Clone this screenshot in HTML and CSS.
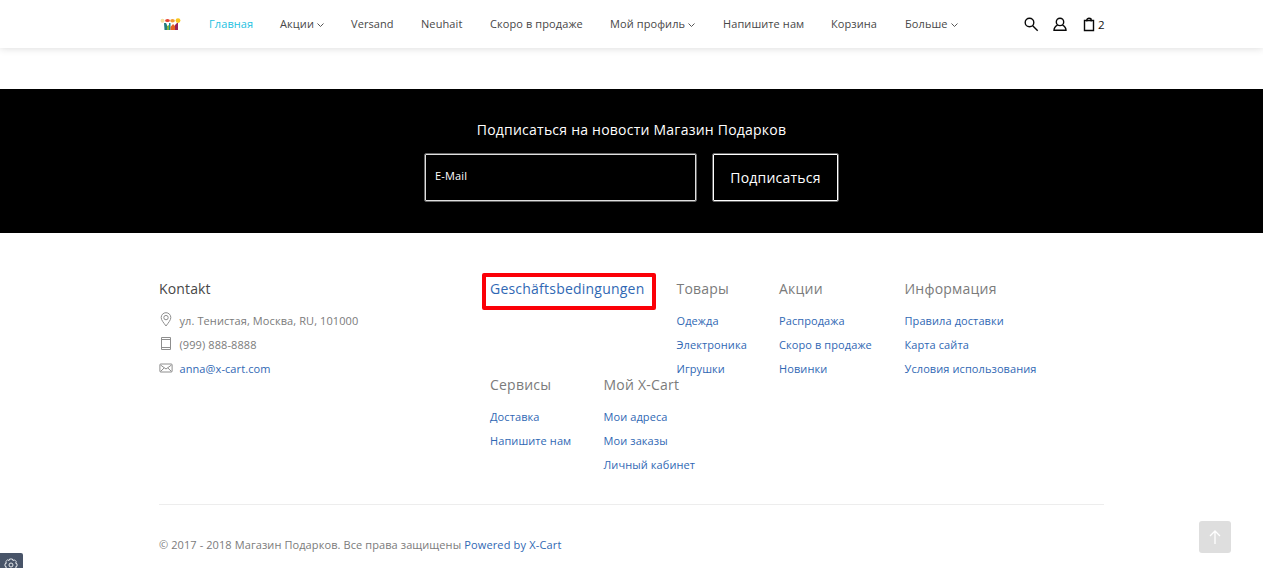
FILE: index.html
```html
<!DOCTYPE html>
<html lang="ru">
<head>
<meta charset="utf-8">
<title>Магазин Подарков</title>
<link rel="stylesheet" href="styles.css">
</head>
<body>
<header class="header">
  <a class="logo" href="#">
    <svg width="21" height="13" viewBox="0 0 21 13">
      <circle cx="2.5" cy="2.8" r="2" fill="#f3dfa0"/>
      <ellipse cx="7.5" cy="2.5" rx="2.4" ry="1.6" fill="#e5402f"/>
      <ellipse cx="12.5" cy="2.8" rx="2.3" ry="1.7" fill="#f09a32"/>
      <circle cx="18" cy="2.6" r="2.4" fill="#f8c51c"/>
      <path d="M4 5h2l1 2v5H4.500z" fill="#247d80"/>
      <path d="M7 8l2-1v5H7z" fill="#80b63c"/>
      <path d="M9 5h1.500v7H9z" fill="#168d9a"/>
      <path d="M10.500 9l2.500-3 2 2v4h-4.500z" fill="#e66221"/>
      <path d="M15 7l2-2h1v7h-3z" fill="#982259"/>
    </svg>
  </a>
  <nav class="nav">
    <a class="active" href="#">Главная</a>
    <a href="#">Акции<svg class="caret" viewBox="0 0 7 4"><path d="M.5.5l3 3 3-3"/></svg></a>
    <a href="#">Versand</a>
    <a href="#">Neuhait</a>
    <a href="#">Скоро в продаже</a>
    <a href="#">Мой профиль<svg class="caret" viewBox="0 0 7 4"><path d="M.5.5l3 3 3-3"/></svg></a>
    <a href="#">Напишите нам</a>
    <a href="#">Корзина</a>
    <a href="#">Больше<svg class="caret" viewBox="0 0 7 4"><path d="M.5.5l3 3 3-3"/></svg></a>
  </nav>
  <div class="tools">
    <svg width="15" height="15" viewBox="0 0 15 15"><circle cx="5.500" cy="5.500" r="4.300"/><path d="M8.700 8.700l5 5"/></svg>
    <svg width="14" height="15" viewBox="0 0 14 15"><circle cx="7" cy="4.900" r="3.700"/><path d="M4.600 8.100C2.300 9.200 1 10.800 1 13.300h12c0-2.500-1.300-4.100-3.600-5.200"/></svg>
    <svg width="12" height="15" viewBox="0 0 12 15"><path d="M1.500 3.500h9v10h-9zM3.800 4.500V3C3.800.7 8.200.7 8.200 3v1.500"/></svg>
    <span class="count">2</span>
  </div>
</header>

<section class="subscribe">
  <h2 class="subscribe-title">Подписаться на новости Магазин Подарков</h2>
  <form class="subscribe-form">
    <input class="email" type="text" placeholder="E-Mail">
    <button class="submit" type="button">Подписаться</button>
  </form>
</section>

<footer class="footer">
  <div class="footer-main">
    <div class="contact">
      <h3 class="dark">Kontakt</h3>
      <p><svg width="14" height="15" viewBox="0 0 14 15"><path d="M7 14C4.500 10.500 2.200 8.200 2.200 5.500a4.800 4.800 0 0 1 9.600 0C11.800 8.200 9.500 10.500 7 14z"/><circle cx="7" cy="5.600" r="2.200"/></svg><span>ул. Тенистая, Москва, RU, 101000</span></p>
      <p><svg width="14" height="15" viewBox="0 0 14 15"><path d="M2.500 1.500h9v12h-9zM2.500 3.500h9M2.500 11.500h9"/></svg><span>(999) 888-8888</span></p>
      <p><svg width="14" height="15" viewBox="0 0 14 15"><rect x=".9" y="4" width="12.200" height="8" rx=".8"/><path d="M1.500 5L7 9l5.500-4M1.500 11.500l3.600-3.500M12.500 11.500L8.900 8"/></svg><a href="#">anna@x-cart.com</a></p>
    </div>
    <div class="links">
      <div class="links-row first">
        <div><h3 class="marked"><a href="#">Geschäftsbedingungen</a></h3></div>
        <div><h3>Товары</h3><a href="#">Одежда</a><a href="#">Электроника</a><a href="#">Игрушки</a></div>
        <div><h3>Акции</h3><a href="#">Распродажа</a><a href="#">Скоро в продаже</a><a href="#">Новинки</a></div>
        <div><h3>Информация</h3><a href="#">Правила доставки</a><a href="#">Карта сайта</a><a href="#">Условия использования</a></div>
      </div>
      <div class="links-row second">
        <div><h3>Сервисы</h3><a href="#">Доставка</a><a href="#">Напишите нам</a></div>
        <div><h3>Мой X-Cart</h3><a href="#">Мои адреса</a><a href="#">Мои заказы</a><a href="#">Личный кабинет</a></div>
      </div>
    </div>
  </div>
  <div class="copyright">© 2017 - 2018 Магазин Подарков. Все права защищены <a href="#">Powered by X-Cart</a></div>
</footer>

<a class="to-top" href="#"><svg width="14" height="16" viewBox="0 0 14 16"><path d="M7 15V2M2 7l5-5 5 5"/></svg></a>
<a class="settings" href="#"><svg width="14" height="14" viewBox="0 0 14 14"><path d="M5.600 1h2.800l.5 1.500 1.600-.6 1.800 1.800-.7 1.500 1.400.6v2.400l-1.400.6.7 1.500-1.800 1.800-1.600-.6-.5 1.500H5.600l-.5-1.500-1.600.6-1.800-1.800.7-1.500L1 8.200V5.800l1.400-.6-.7-1.500 1.800-1.800 1.600.6z"/><circle cx="7" cy="7" r="2"/></svg></a>
</body>
</html>
```
FILE: styles.css
```css
* { box-sizing: border-box; }
body {
  margin: 0;
  height: 568px;
  overflow: hidden;
  background: #fff;
  color: #7b7b7b;
  font: 11px/24px "Open Sans", "Noto Sans", sans-serif;
  letter-spacing: .09px;
}
a { color: #3068b4; text-decoration: none; }
svg { display: block; fill: none; flex: none; }
h2, h3, p { margin: 0; font-weight: 400; }

.header {
  display: grid;
  grid-template-columns: 49px 815px 1fr;
  align-items: center;
  height: 48px;
  padding-left: 160px;
  box-shadow: 0 0 8px rgba(0, 0, 0, .16);
}
.nav {
  display: grid;
  grid-template-columns: 71px 71px 70px 69px 120px 113px 108px 74px 60px;
}
.nav a {
  display: flex;
  align-items: center;
  color: #474747;
  white-space: nowrap;
}
.nav .active { color: #23bfdf; }
.caret {
  width: 7px;
  height: 4px;
  margin: 2px 0 0 3px;
  stroke: #555;
}
.tools {
  display: flex;
  align-items: center;
  color: #111;
}
.tools svg { stroke: #080808; stroke-width: 1.4; margin-right: 16px; }
.tools svg:first-child { margin-right: 14px; }
.tools svg:nth-child(3) { margin-right: 3px; }
.count { font-size: 11.5px; padding-top: 1px; }

.subscribe {
  height: 144px;
  margin-top: 41px;
  padding-top: 29px;
  background: #000;
  color: #fff;
}
.subscribe-title {
  font-size: 14px;
  line-height: 24px;
  letter-spacing: .23px;
  text-align: center;
}
.subscribe-form {
  display: flex;
  justify-content: center;
  gap: 15px;
  margin-top: 11px;
}
.email, .submit {
  height: 49px;
  border: 1px solid #666;
  border-radius: 2px;
  background: #000;
  box-shadow: inset 0 0 0 1px #e0e0e0;
  color: #fff;
  font-family: inherit;
}
.email { width: 273px; padding: 0 10px 4px; font-size: 11px; letter-spacing: .15px; }
.email::placeholder { color: #fff; opacity: 1; }
.submit {
  width: 127px;
  padding: 0;
  box-shadow: inset 0 0 0 1px #fff;
  font-size: 14px;
  letter-spacing: .23px;
}

.footer { width: 945px; margin-left: 159px; padding-top: 44px; }
.footer-main {
  display: grid;
  grid-template-columns: 331px 1fr;
  height: 228px;
  border-bottom: 1px solid #ededed;
}
.footer h3 {
  height: 32px;
  font-size: 14px;
  line-height: 24px;
  letter-spacing: .22px;
  white-space: nowrap;
}
.footer .dark { color: #474747; letter-spacing: .15px; }
.contact p { display: flex; align-items: center; }
.contact svg { margin: -3px 7px 0 -.5px; stroke: #8e8e8e; }
.links-row { display: grid; height: 96px; }
.links-row.first { grid-template-columns: 186.500px 102.500px 125.500px 150px; }
.links-row.second { grid-template-columns: 113.500px 150px; }
.links-row div > a { display: block; white-space: nowrap; }
.footer .marked {
  width: 174px;
  height: 37px;
  margin: -4px 0 0 -8px;
  padding-left: 4px;
  border: 4px solid #fb0007;
  border-radius: 2px;
}
.copyright { padding-top: 28px; }
.copyright a { letter-spacing: .16px; }

.to-top, .settings {
  position: absolute;
  display: flex;
  justify-content: center;
}
.to-top {
  left: 1199px;
  top: 521px;
  width: 32px;
  height: 32px;
  align-items: center;
  border-radius: 3px;
  background: #dedede;
}
.to-top svg { stroke: #fff; stroke-width: 1.3; }
.settings {
  left: 0;
  top: 553px;
  width: 23px;
  height: 15px;
  padding: 5px 1px 0 0;
  overflow: hidden;
  border-top-right-radius: 2px;
  background: #485468;
}
.settings svg { stroke: #e4e7eb; }
```
